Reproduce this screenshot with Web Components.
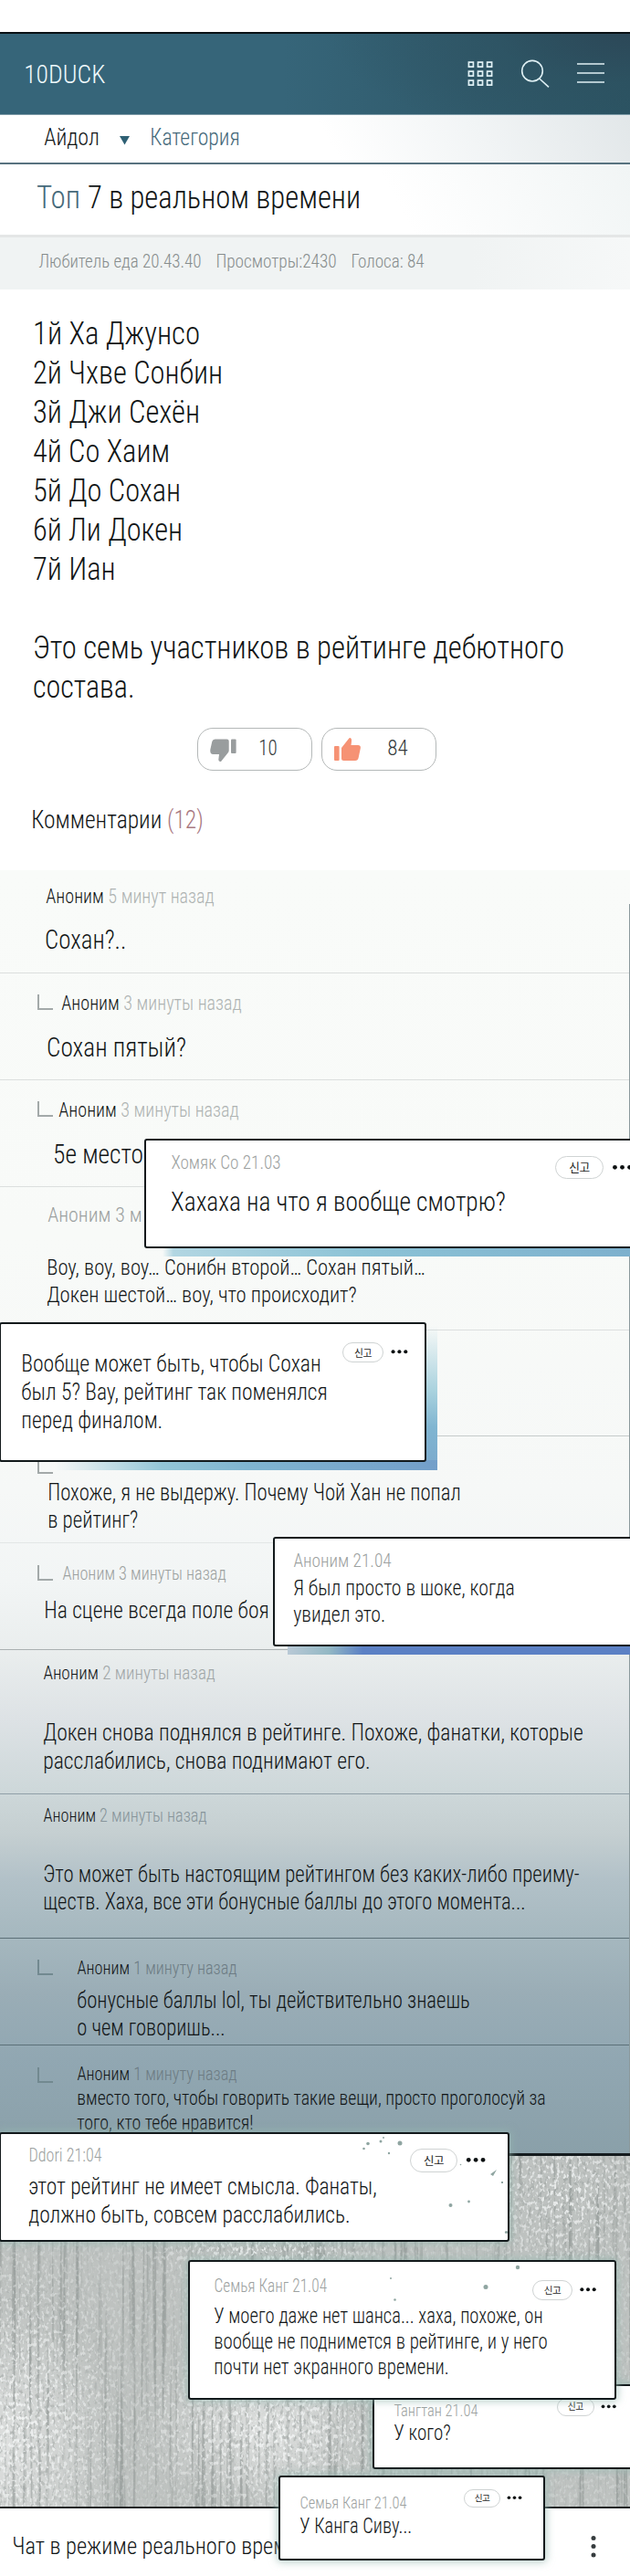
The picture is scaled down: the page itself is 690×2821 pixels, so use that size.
<!DOCTYPE html>
<html lang="ru">
<head>
<meta charset="utf-8">
<title>10DUCK</title>
<style>
html,body{margin:0;padding:0;background:#fff}
body{width:690px;height:2821px;overflow:hidden;font-family:Roboto,"Liberation Sans","Noto Sans CJK KR",sans-serif;font-weight:300;font-stretch:75%;color:#111516}
</style>
</head>
<body>
<duck-page></duck-page>

<script>
const define = (name, html, setup) => {
  const tpl = document.createElement('template');
  tpl.innerHTML = html;
  customElements.define(name, class extends HTMLElement {
    connectedCallback() {
      if (this.shadowRoot) return;
      this.attachShadow({ mode: 'open' }).appendChild(tpl.content.cloneNode(true));
      if (setup) setup(this, this.shadowRoot);
    }
  });
};
const num = (el, name, fallback = 0) => el.hasAttribute(name) ? parseFloat(el.getAttribute(name)) : fallback;

/* One text line. d: distance down to its baseline, x: indent, w: set width, s: font size. */
define('fit-line', `
<style>
:host{display:flex;align-items:flex-end;flex:none;white-space:nowrap}
span{flex:none;display:block;line-height:1.172;margin-bottom:-.244em;transform-origin:0 50%}
</style><span><slot></slot></span>`, (el, root) => {
  const s = num(el, 's', 25), w = num(el, 'w'), span = root.querySelector('span');
  el.style.cssText += `;font-size:${s}px;height:${num(el, 'd')}px;width:${w}px;margin-left:${num(el, 'x')}px`;
  const k = (w + s * .06) / span.getBoundingClientRect().width;
  span.style.transform = `translateX(${-s * .03}px) scaleX(${k})`;
});

define('top-bar', `
<style>
:host{display:flex;box-sizing:border-box;height:90.5px;border-top:2.5px solid #091014;border-bottom:1px solid #7c9aa7;color:#eef8fb;
background:radial-gradient(ellipse 330px 120px at 100% 0,#2c4858 0,#2d505f80 45%,#2d505f00 100%),linear-gradient(90deg,#366579 0 45%,#305a6b 75%,#2b5463)}
svg{display:block;margin-left:auto}
</style>
<fit-line x="27" w="87.5" s="28.5" d="54.5">10DUCK</fit-line>
<svg width="190" height="87" viewBox="500 38 190 87" fill="none" stroke="#dff0f4">
<g stroke-width="1.7">
<path d="M513.4 69.2h5v5h-5zM523.5 69.2h5v5h-5zM533.6 69.2h5v5h-5zM513.4 79.2h5v5h-5zM523.5 79.2h5v5h-5zM533.6 79.2h5v5h-5zM513.4 89.2h5v5h-5zM523.5 89.2h5v5h-5zM533.6 89.2h5v5h-5z"/></g>
<g stroke-width="1.6"><circle cx="583" cy="78.7" r="11.3"/><path d="M590.7 87l10.3 9.3"/><path d="M632 71h30M632 81h30M632 91h30"/></g>
</svg>`);

define('vote-button', `
<style>
:host{display:flex;box-sizing:border-box;width:126px;height:47px;border:1.3px solid #b4b8b8;border-radius:17px;background:#fff;color:#33393b}
svg{flex:none;display:block;margin:8px 0 0 12px}
</style><svg width="32" height="32" viewBox="0 0 32 32"></svg><slot></slot>`, (el, root) => {
  root.querySelector('svg').innerHTML = el.hasAttribute('up')
    ? '<g fill="#f69274"><rect x="1" y="11" width="5.6" height="16" rx="1"/><path d="M9 13 17.300 2.600Q18.500 1 19.800 3.200Q20.400 4.500 19.500 10H27Q30.500 10 29.800 13.500L27.600 24Q27 27 24 27H11.500Q9 27 9 24.500z"/></g>'
    : '<g fill="#999d9e"><rect x="24" y="3.500" width="5.600" height="15.500" rx="1"/><path d="M21.700 5.500Q21.700 3.500 19.500 3.500H6.500Q4 3.500 3.300 6L1.300 15Q.7 20 4.500 20H11L10.300 26Q10.500 28.500 13 28L21 18Q21.700 17 21.700 16z"/></g>';
});

define('comment-item', `
<style>
:host{display:block;box-sizing:border-box;position:relative;border-bottom:1.4px solid var(--rule,#dcdfde)}
i{display:none;position:absolute;left:41px;width:15px;height:15px;border:solid #a3a9a9;border-width:0 0 2px 2px}
</style><i></i><slot></slot>`, (el, root) => {
  el.style.height = num(el, 'h') + 'px';
  if (el.hasAttribute('elbow')) {
    const i = root.querySelector('i');
    i.style.display = 'block';
    i.style.top = num(el, 'elbow') + 'px';
    if (el.hasAttribute('dim')) i.style.borderColor = '#728990';
  }
});

define('report-tag', `
<style>
:host{display:block;position:absolute}
.r{display:flex;align-items:center}
b{display:flex;align-items:center;justify-content:center;box-sizing:border-box;border:1.2px solid #cfd3d3;border-radius:40px;background:#fff;font:400 11px/1 "Noto Sans CJK KR",sans-serif;color:#222;letter-spacing:-.5px}
svg{display:block;flex:none;overflow:visible}
</style><div class="r"><b>신고</b><svg></svg></div>`, (el, root) => {
  const w = num(el, 'w'), h = num(el, 'h'), r = w / 22, b = root.querySelector('b'), svg = root.querySelector('svg');
  el.style.left = num(el, 'x') + 'px';
  el.style.top = num(el, 'y') + 'px';
  b.style.width = w + 'px';
  b.style.height = h + 'px';
  b.style.fontSize = w * .24 + 'px';
  const step = w * .152, x0 = w * .235;
  svg.setAttribute('width', x0 + step * 2 + r);
  svg.setAttribute('height', 8);
  svg.innerHTML = [0, 1, 2].map(n => `<circle cx="${x0 + step * n}" cy="3.300" r="${r}" fill="#0d1112"/>`).join('');
});

define('pop-card', `
<style>
:host{display:block;box-sizing:border-box;position:absolute;border:2px solid #12191b;border-radius:3px;background:#fff}
.in{height:100%;position:relative}
</style><div class="in"><slot></slot></div>`, (el) => {
  const [x, y, r, b] = el.getAttribute('box').split(' ').map(Number);
  el.style.cssText += `;left:${x}px;top:${y}px;width:${r - x}px;height:${b - y}px`;
  if (el.hasAttribute('glow')) el.style.boxShadow = '0 0 8px 2px rgba(151,185,176,.65)';
});

define('noise-panel', `
<style>:host{display:block;height:386px;background:#bec2c0;overflow:hidden}svg{display:block}</style>
<svg width="690" height="386">
<defs>
<filter id="streak" x="0" y="0" width="100%" height="100%" color-interpolation-filters="sRGB">
<feTurbulence type="fractalNoise" baseFrequency=".22 .004" numOctaves="2" seed="4"/>
<feColorMatrix values="0 0 0 0 .5  0 0 0 0 .53  0 0 0 0 .52  5 0 0 0 -2.700"/></filter>
<filter id="grain" x="0" y="0" width="100%" height="100%" color-interpolation-filters="sRGB">
<feTurbulence type="fractalNoise" baseFrequency=".3 .2" numOctaves="2" seed="9"/>
<feColorMatrix values="0 0 0 0 .96  0 0 0 0 .97  0 0 0 0 .97  0 7 0 0 -3.700"/></filter>
<filter id="dark" x="0" y="0" width="100%" height="100%" color-interpolation-filters="sRGB">
<feTurbulence type="fractalNoise" baseFrequency=".28 .18" numOctaves="2" seed="21"/>
<feColorMatrix values="0 0 0 0 .56  0 0 0 0 .59  0 0 0 0 .58  0 0 6 0 -3.300"/></filter>
<radialGradient id="lg"><stop offset="0" stop-color="#fff"/><stop offset="1" stop-color="#fff" stop-opacity="0"/></radialGradient>
<mask id="m"><rect width="690" height="386" fill="#444"/><ellipse cx="20" cy="290" rx="130" ry="200" fill="url(#lg)"/><ellipse cx="300" cy="300" rx="170" ry="110" fill="url(#lg)"/><ellipse cx="620" cy="40" rx="110" ry="110" fill="url(#lg)"/><ellipse cx="290" cy="105" rx="140" ry="35" fill="url(#lg)"/></mask>
</defs>
<ellipse cx="10" cy="320" rx="120" ry="160" fill="url(#lg)" opacity=".5"/>
<ellipse cx="290" cy="300" rx="130" ry="90" fill="url(#lg)" opacity=".5"/>
<rect width="690" height="386" filter="url(#streak)" opacity=".5"/>
<g mask="url(#m)"><rect width="690" height="386" filter="url(#dark)" opacity=".5"/><rect width="690" height="386" filter="url(#grain)" opacity=".85"/></g>
</svg>`);

define('chat-bar', `
<style>
:host{display:flex;box-sizing:border-box;height:77px;border-top:2px solid #1c2325;background:#fff}
svg{display:block;margin-left:auto}
</style><slot></slot>
<svg width="80" height="75" viewBox="610 2746 80 75" fill="#363c3e"><circle cx="650" cy="2778.500" r="2.500"/><circle cx="650" cy="2787.500" r="2.500"/><circle cx="650" cy="2797" r="2.500"/></svg>`);

define('duck-page', `
<style>
:host{display:block;position:relative;width:690px;height:2821px;overflow:hidden;padding-top:35px;box-sizing:border-box;background:#fff}
.cat{display:flex;box-sizing:border-box;height:54.5px;border-bottom:2px solid #57727f;background:linear-gradient(62deg,#fff 52%,#f1f4f5 76%,#e2e7e9)}
.cat svg{display:block;margin:23px 0 0 23px}
.title{display:flex;box-sizing:border-box;height:79.500px;border-bottom:3px solid #e4e6e6;background:linear-gradient(62deg,#fff 62%,#f1f5f5 100%)}
.meta{display:flex;height:57px;background:linear-gradient(90deg,#f0f3f3 75%,#f6f8f8);color:#868c8c}
.teal{color:#45697a}
.post{height:462px}
.votes{display:flex;gap:10px;padding:0 0 0 216px;height:47px}
.head{height:109px}
.pink{color:#a9787f}
.list{box-sizing:border-box;height:1408px;border-bottom:3px solid #141b1e;position:relative;
background:linear-gradient(180deg,#f9fbf9 0,#f8faf8 400px,#f6f8f7 680px,#f2f5f5 780px,#e9eded 860px,#dde2e5 930px,#ced8da 1005px,#c5cfd1 1055px,#b2c1c8 1105px,#a7b9c0 1160px,#9aadb6 1230px,#91a7b2 1300px,#8aa0a9 1408px)}
.edge{position:absolute;right:0;top:37px;bottom:0;width:1.300px;background:#8b999c}
.t{color:#aeb3b2}.t2{color:#87949a}.t3{color:#6d7c84}.g{color:#9ca1a0}
.shade{position:absolute}
.spots{position:absolute;left:0;top:2330px;display:block}
</style>
<top-bar></top-bar>
<div class="cat">
<fit-line x="49" w="59" s="25.500" d="34.500">Айдол</fit-line>
<svg width="11" height="10"><path d="M0 0h11L5.500 9.500z" fill="#2e6074"/></svg>
<fit-line class="teal" x="23" w="97" s="25.500" d="34.500">Категория</fit-line>
</div>
<div class="title">
<fit-line class="teal" x="41" w="46" s="35.500" d="49">Топ</fit-line>
<fit-line x="10" w="297" s="35.500" d="49">7 в реальном времени</fit-line>
</div>
<div class="meta">
<fit-line x="43" w="177" s="20.500" d="33.500">Любитель еда 20.43.40</fit-line>
<fit-line x="17" w="131" s="20.500" d="33.500">Просмотры:2430</fit-line>
<fit-line x="17" w="79" s="20.500" d="33.500">Голоса: 84</fit-line>
</div>
<div class="post">
<fit-line x="37" w="181" s="35" d="61">1й Ха Джунсо</fit-line>
<fit-line x="37" w="206" s="35" d="43">2й Чхве Сонбин</fit-line>
<fit-line x="37" w="181" s="35" d="43">3й Джи Сехён</fit-line>
<fit-line x="37" w="148" s="35" d="43">4й Со Хаим</fit-line>
<fit-line x="37" w="160" s="35" d="43">5й До Сохан</fit-line>
<fit-line x="37" w="162" s="35" d="43">6й Ли Докен</fit-line>
<fit-line x="37" w="88.500" s="35" d="43.200">7й Иан</fit-line>
<fit-line x="37" w="580" s="35" d="86">Это семь участников в рейтинге дебютного</fit-line>
<fit-line x="37" w="109.500" s="35" d="43">состава.</fit-line>
</div>
<div style="height:18px"></div>
<div class="votes">
<vote-button><fit-line x="22.500" w="19" s="23.500" d="30.500">10</fit-line></vote-button>
<vote-button up><fit-line x="28" w="21" s="23.500" d="30.500">84</fit-line></vote-button>
</div>
<div class="head"><fit-line x="35" w="187" s="27" d="64.500">Комментарии <span class="pink">(12)</span></fit-line></div>

<div class="list">
<comment-item h="113.500">
<fit-line x="51" w="183" s="22" d="37">Аноним <span class="t">5 минут назад</span></fit-line>
<fit-line x="50" w="87.500" s="29.500" d="49.500">Сохан?..</fit-line></comment-item>
<comment-item h="117" elbow="23">
<fit-line x="68" w="196" s="22" d="40.500">Аноним <span class="t">3 минуты назад</span></fit-line>
<fit-line x="52" w="151" s="29.500" d="50.500">Сохан пятый?</fit-line></comment-item>
<comment-item h="116.500" elbow="23">
<fit-line x="65" w="196" s="22" d="40.500">Аноним <span class="t">3 минуты назад</span></fit-line>
<fit-line x="59" w="97" s="29.500" d="51">5е место</fit-line></comment-item>
<comment-item h="157.500">
<fit-line class="g" x="53" w="102" s="22.500" d="38">Аноним 3 м</fit-line>
<fit-line x="52" w="413" s="24.500" d="59.500">Воу, воу, воу… Сонибн второй… Сохан пятый…</fit-line>
<fit-line x="52" w="338" s="24.500" d="30">Докен шестой… воу, что происходит?</fit-line></comment-item>
<comment-item h="116" style="--rule:#c6cbcb"></comment-item>
<comment-item h="117" elbow="24" style="--rule:#e3e6e6">
<fit-line x="53" w="451" s="25" d="70.500">Похоже, я не выдержу. Почему Чой Хан не попал</fit-line>
<fit-line x="53" w="97.500" s="25" d="30">в рейтинг?</fit-line></comment-item>
<comment-item h="117" elbow="23.500" style="--rule:#a9b0b1">
<fit-line class="g" x="69" w="178" s="20.500" d="40.500">Аноним 3 минуты назад</fit-line>
<fit-line x="49" w="245" s="25" d="42">На сцене всегда поле боя</fit-line></comment-item>
<comment-item h="158" style="--rule:#90a0a8">
<fit-line x="48" w="187" s="20.500" d="32.500">Аноним <span style="color:#a0a6a7">2 минуты назад</span></fit-line>
<fit-line x="48" w="590" s="25.500" d="67.500">Докен снова поднялся в рейтинге. Похоже, фанатки, которые</fit-line>
<fit-line x="48" w="357" s="25.500" d="30.500">расслабились, снова поднимают его.</fit-line></comment-item>
<comment-item h="158" style="--rule:#5c6f77">
<fit-line x="48" w="178" s="20" d="30.500">Аноним <span class="t2">2 минуты назад</span></fit-line>
<fit-line x="48" w="586" s="25" d="66">Это может быть настоящим рейтингом без каких-либо преиму-</fit-line>
<fit-line x="48" w="527" s="25" d="30">ществ. Хаха, все эти бонусные баллы до этого момента...</fit-line></comment-item>
<comment-item h="116.500" elbow="23" dim style="--rule:#5c7079">
<fit-line x="85" w="174" s="20" d="39.500">Аноним <span class="t3">1 минуту назад</span></fit-line>
<fit-line x="85" w="429" s="25" d="37">бонусные баллы lol, ты действительно знаешь</fit-line>
<fit-line x="85" w="161" s="25" d="30">о чем говоришь...</fit-line></comment-item>
<comment-item h="116" elbow="24" dim style="--rule:transparent">
<fit-line x="85" w="174" s="20" d="39.500">Аноним <span class="t3">1 минуту назад</span></fit-line>
<fit-line x="85" w="512" s="21.500" d="25.500">вместо того, чтобы говорить такие вещи, просто проголосуй за</fit-line>
<fit-line x="85" w="192" s="21.500" d="27">того, кто тебе нравится!</fit-line></comment-item>
<div class="edge"></div>
</div>
<div style="height:384.500px"><noise-panel></noise-panel></div>
<chat-bar style="position:relative"><fit-line x="14" w="300" s="26" d="50">Чат в режиме реального врем</fit-line></chat-bar>

<div class="shade" style="left:178px;top:1366px;width:512px;height:10px;background:linear-gradient(90deg,transparent,#b2d6e2 12px,#8cc3d6 220px,#7db0cd)"></div>
<pop-card box="158 1247 700 1367">
<fit-line class="g" x="28" w="119" s="20.500" d="31">Хомяк Со 21.03</fit-line>
<fit-line x="28" w="365" s="29.500" d="46">Хахаха на что я вообще смотрю?</fit-line>
<report-tag x="448" y="17" w="53" h="25"></report-tag></pop-card>

<div class="shade" style="left:467px;top:1452px;width:12px;height:158px;background:linear-gradient(180deg,#d5e8ec00,#a9d2de 45%,#80b5d1 70%,#7ba9cc)"></div>
<div class="shade" style="left:60px;top:1599px;width:419px;height:11px;background:linear-gradient(90deg,transparent,#93c5d6 28%,#80b5d1 50%,#739fc9)"></div>
<pop-card box="-1 1447.500 467 1600.500">
<fit-line x="23" w="327" s="25.500" d="53">Вообще может быть, чтобы Сохан</fit-line>
<fit-line x="23" w="334" s="25.500" d="30.700">был 5? Вау, рейтинг так поменялся</fit-line>
<fit-line x="23" w="153.500" s="25.500" d="31">перед финалом.</fit-line>
<report-tag x="374" y="20.500" w="45" h="22"></report-tag></pop-card>

<div class="shade" style="left:315px;top:1801px;width:375px;height:10.500px;background:linear-gradient(90deg,#b9c9d6,#93b8c4 12%,#5b80c4 22%)"></div>
<pop-card box="299 1682.500 700 1802.500">
<fit-line class="g" x="21" w="106" s="20.500" d="31.500">Аноним 21.04</fit-line>
<fit-line x="21" w="241" s="24" d="31.700">Я был просто в шоке, когда</fit-line>
<fit-line x="21" w="99.500" s="24" d="29">увидел это.</fit-line></pop-card>

<pop-card glow box="-1 2334.500 558 2455">
<fit-line class="g" x="31" w="79" s="20.500" d="31">Ddori 21:04</fit-line>
<fit-line x="31" w="380" s="25" d="35.500">этот рейтинг не имеет смысла. Фанаты,</fit-line>
<fit-line x="31" w="351" s="25" d="31">должно быть, совсем расслабились.</fit-line>
<report-tag x="448" y="16.500" w="52" h="26"></report-tag></pop-card>

<pop-card glow box="408 2611 700 2704">
<fit-line class="g" x="22" w="91" s="19" d="33.300">Тангтан 21.04</fit-line>
<fit-line x="22" w="61" s="23" d="27">У кого?</fit-line>
<report-tag x="200" y="13" w="40.500" h="20"></report-tag></pop-card>

<pop-card glow box="206 2475 675 2628">
<fit-line class="g" x="27" w="122.500" s="20" d="33.500">Семья Канг 21.04</fit-line>
<fit-line x="27" w="359" s="23" d="34.500">У моего даже нет шанса... хаха, похоже, он</fit-line>
<fit-line x="27" w="364" s="23" d="28.300">вообще не поднимется в рейтинге, и у него</fit-line>
<fit-line x="27" w="256" s="23" d="28.300">почти нет экранного времени.</fit-line>
<report-tag x="375" y="20" w="44" h="22"></report-tag></pop-card>

<pop-card glow box="305 2711 597 2804">
<fit-line class="g" x="22" w="116" s="19" d="35">Семья Канг 21.04</fit-line>
<fit-line x="22" w="121.500" s="23" d="27">У Канга Сиву...</fit-line>
<report-tag x="201" y="13" w="40" h="20"></report-tag></pop-card>

<svg class="spots" width="690" height="200" viewBox="0 2330 690 200" fill="#8fa5a1">
<circle cx="398.500" cy="2353" r="1.300"/><circle cx="403" cy="2347.500" r="1.800"/><circle cx="417" cy="2345" r="1.500"/><circle cx="420" cy="2341" r="1"/><circle cx="438" cy="2347" r="2.500"/><circle cx="426" cy="2358" r="1.200"/>
<path d="M537 2381l7-5-4 7zM549 2389h2v2h-2z"/><circle cx="493.500" cy="2415" r="2"/><circle cx="513.500" cy="2411" r="1.400"/><circle cx="554.500" cy="2444.500" r="1.600"/><circle cx="504.500" cy="2370.500" r=".8"/>
<circle cx="567" cy="2483" r="2.200"/><circle cx="532" cy="2504.500" r="2.500"/><circle cx="428" cy="2495" r="1"/><circle cx="432.500" cy="2518.500" r="1.300"/>
</svg>
`);
</script>
</body>
</html>
